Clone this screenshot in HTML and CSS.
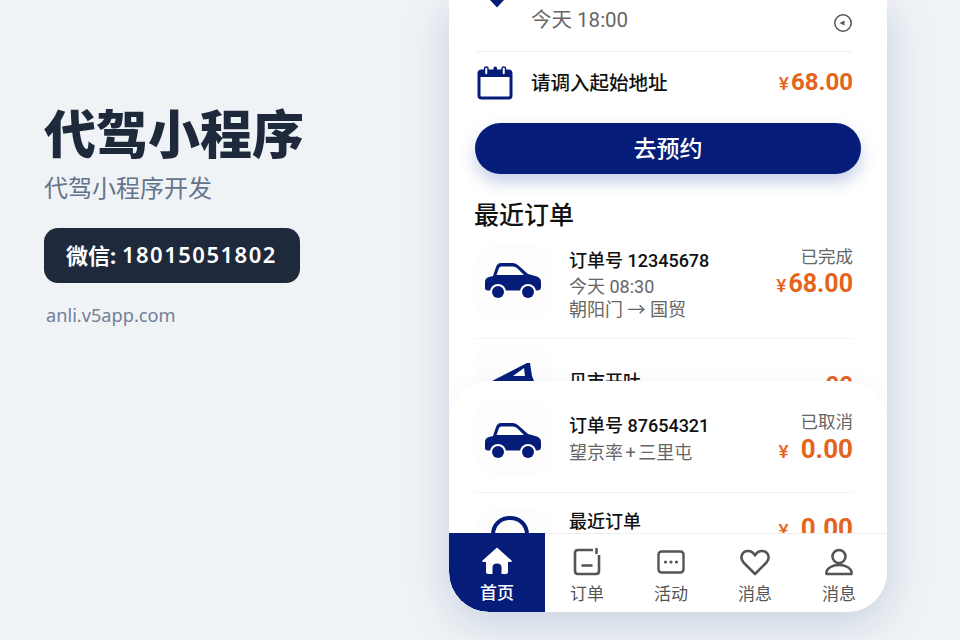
FILE: index.html
```html
<!DOCTYPE html>
<html lang="zh">
<head>
<meta charset="utf-8">
<title>代驾小程序</title>
<link rel="stylesheet" href="styles.css">
</head>
<body>
<svg class="defs" width="0" height="0" aria-hidden="true">
  <symbol id="car" viewBox="0 0 56 36">
    <path fill="#051d78" d="M0 19Q0 15 4 14L8 13L11 4Q12.500 0 16 0H28Q31 0 34 3L43 11L52 13.500Q56 15 56 19V24Q56 27.500 52 27.500H3Q0 27.500 0 25Z"/>
    <path fill="#fff" d="M11.500 12L14 5Q14.500 3.500 16.500 3.500H28Q30 3.500 32 5L39 12Z"/>
    <circle cx="13" cy="29" r="8" fill="#fff"/>
    <circle cx="13" cy="29" r="6" fill="#051d78"/>
    <circle cx="43" cy="29" r="8" fill="#fff"/>
    <circle cx="43" cy="29" r="6" fill="#051d78"/>
  </symbol>
</svg>
<main class="stage">
  <section class="intro">
    <h1 class="intro-title">代驾小程序</h1>
    <p class="intro-sub">代驾小程序开发</p>
    <div class="intro-badge">微信:&nbsp;<span class="intro-phone">18015051802</span></div>
    <p class="intro-link">anli.v5app.com</p>
  </section>

  <section class="phone">
    <div class="scroll">
      <div class="trip-row">
        <svg class="pin" width="20" height="8" viewBox="0 0 20 8"><path fill="#051d78" d="M3 0H17L10 7.500Z"/></svg>
        <span class="trip-time">今天 18:00</span>
        <svg class="clock" width="20" height="20" viewBox="0 0 20 20"><circle cx="10" cy="10" r="8.200" fill="none" stroke="#555" stroke-width="1.500"/><path fill="#555" d="M6.500 10L11.500 7.500V12.500Z"/></svg>
      </div>
      <div class="addr-row">
        <svg class="cal" width="36" height="34" viewBox="0 0 36 34"><rect x="2" y="5" width="32" height="27" rx="2.500" fill="#fff" stroke="#051d78" stroke-width="3"/><path fill="#051d78" d="M2 4H34V11H2Z"/><g fill="#fff" stroke="#051d78" stroke-width="1.500"><rect x="7.500" y="1" width="3.500" height="8" rx="1.700"/><rect x="25" y="1" width="3.500" height="8" rx="1.700"/></g><rect x="16.500" y="0.500" width="3.500" height="6" rx="1.700" fill="#051d78"/></svg>
        <span class="addr-text">请调入起始地址</span>
        <span class="price"><i class="yen">¥</i>68.00</span>
      </div>
      <button class="cta" type="button">去预约</button>
      <h2 class="section-title">最近订单</h2>

      <article class="order order-first">
        <div class="order-icon"><svg class="car" width="56" height="36"><use href="#car"/></svg></div>
        <div class="order-main">
          <div class="order-title">订单号 12345678</div>
          <div class="order-line">今天 08:30</div>
          <div class="order-line">朝阳门 → 国贸</div>
        </div>
        <div class="order-side">
          <div class="order-state">已完成</div>
          <div class="price price-large"><i class="yen">¥</i>68.00</div>
        </div>
      </article>

      <article class="order order-second">
        <div class="order-icon order-icon-top"><svg class="ramp" width="42" height="18" viewBox="0 0 42 18"><path fill="#051d78" fill-rule="evenodd" d="M0 18L35 0H38L40 13L42 18ZM21 13H33L32 5Z"/></svg></div>
        <div class="order-main">
          <div class="order-title">贝市开吐</div>
        </div>
        <div class="order-side">
          <div class="price">00</div>
        </div>
      </article>
    </div>

    <div class="sheet">
      <article class="order order-third">
        <div class="order-icon"><svg class="car" width="56" height="36"><use href="#car"/></svg></div>
        <div class="order-main">
          <div class="order-title">订单号 87654321</div>
          <div class="order-line">望京率 + 三里屯</div>
        </div>
        <div class="order-side">
          <div class="order-state">已取消</div>
          <div class="price price-wide"><i class="yen">¥</i>0.00</div>
        </div>
      </article>
      <article class="order order-fourth">
        <div class="order-icon order-icon-top"><svg class="bag" width="40" height="24" viewBox="0 0 40 24"><path fill="none" stroke="#051d78" stroke-width="4" d="M3 24V20C3 10 10 3 20 3S37 10 37 20V24"/></svg></div>
        <div class="order-main">
          <div class="order-title">最近订单</div>
        </div>
        <div class="order-side">
          <div class="price price-wide"><i class="yen">¥</i>0.00</div>
        </div>
      </article>
    </div>

    <nav class="tabbar">
      <a class="tab tab-active">
        <svg width="32" height="30" viewBox="0 0 32 30"><path fill="#fff" d="M16 1.500L30.500 14.500Q31.500 16 29.500 16H27V26Q27 28 25 28H20.500V21.500Q20.500 17.500 16 17.500T11.500 21.500V28H7Q5 28 5 26V16H2.500Q0.500 16 1.500 14.500Z"/></svg>
        <span>首页</span>
      </a>
      <a class="tab">
        <svg width="32" height="30" viewBox="0 0 32 30" fill="none" stroke="#555" stroke-width="2.600"><path d="M22 3H7Q4 3 4 6V24Q4 27 7 27H25Q28 27 28 24V8"/><path d="M10.500 18.500H21.500"/><path d="M25.500 2V6" stroke-linecap="round"/></svg>
        <span>订单</span>
      </a>
      <a class="tab">
        <svg width="32" height="30" viewBox="0 0 32 30" fill="none" stroke="#555" stroke-width="2.400"><rect x="3.500" y="4.500" width="25" height="21" rx="3"/><g fill="#555" stroke="none"><circle cx="10.500" cy="15" r="1.600"/><circle cx="16" cy="15" r="1.600"/><circle cx="21.500" cy="15" r="1.600"/></g></svg>
        <span>活动</span>
      </a>
      <a class="tab">
        <svg width="32" height="30" viewBox="0 0 32 30" fill="none" stroke="#555" stroke-width="2.600"><path d="M16 27L4.500 15.500C0 10 3.500 4 9 4C12 4 14.500 5.500 16 8.500C17.500 5.500 20 4 23 4C28.500 4 32 10 27.500 15.500Z" stroke-linejoin="round"/></svg>
        <span>消息</span>
      </a>
      <a class="tab">
        <svg width="32" height="30" viewBox="0 0 32 30" fill="none" stroke="#555" stroke-width="2.600"><circle cx="16" cy="9.500" r="6.500"/><path d="M3.500 27C2.500 21 10 18 16 18S29.500 21 28.500 27Z" stroke-linejoin="round"/></svg>
        <span>消息</span>
      </a>
    </nav>
  </section>
</main>
</body>
</html>
```
FILE: styles.css
```css
* { box-sizing: border-box; }

html, body {
  margin: 0;
  height: 100%;
  overflow: hidden;
}

body {
  background: #f0f3f6;
  font-family: "Roboto", "Noto Sans CJK SC", sans-serif;
}

.defs { display: block; height: 0; }

.stage {
  display: flex;
  width: 960px;
  height: 640px;
}

/* Left intro */
.intro {
  width: 449px;
  padding: 102px 0 0 44px;
  font-family: "Noto Sans", "Noto Sans CJK SC", sans-serif;
}

.intro-title {
  margin: 0;
  font-size: 52px;
  line-height: 64px;
  font-weight: 800;
  color: #1e293b;
}

.intro-sub {
  margin: 6px 0 0;
  font-size: 24px;
  line-height: 32px;
  color: #64748b;
}

.intro-badge {
  display: flex;
  align-items: center;
  width: 256px;
  height: 55px;
  margin-top: 24px;
  padding: 0 0 4px 22px;
  border-radius: 14px;
  background: #1e293b;
  color: #fff;
  font-size: 22px;
  font-weight: 700;
}

.intro-phone {
  font-weight: 600;
  letter-spacing: 1.500px;
}

.intro-link {
  margin: 18px 0 0 2px;
  font-size: 18.200px;
  line-height: 28px;
  color: #718096;
}

/* Phone */
.phone {
  position: relative;
  width: 438px;
  height: 612px;
  border-radius: 0 0 40px 40px;
  background: #fff;
  box-shadow: 0 10px 44px rgba(100, 125, 170, .3);
  overflow: hidden;
}

.scroll {
  height: 400px;
  padding: 0 34px 0 26px;
  overflow: hidden;
}

.trip-row {
  position: relative;
  height: 52px;
  padding-left: 56px;
  border-bottom: 1px solid #f0f0f2;
}

.pin {
  position: absolute;
  left: 12px;
  top: 0;
}

.trip-time {
  display: block;
  padding-top: 6px;
  font-size: 20.500px;
  line-height: 28px;
  color: #666;
}

.clock {
  position: absolute;
  right: 0;
  top: 13px;
}

.addr-row {
  display: flex;
  align-items: center;
  height: 62px;
}

.cal { margin: 0 18px 0 2px; flex: none; }

.addr-text {
  flex: 1;
  padding-bottom: 3px;
  font-size: 19.500px;
  font-weight: 500;
  color: #111;
}

.price {
  display: block;
  color: #e4641c;
  font-size: 24px;
  line-height: 30px;
  font-weight: 700;
  white-space: nowrap;
  text-align: right;
}

.price-large { font-size: 25px; }

.yen {
  margin-right: 2px;
  font-style: normal;
  font-size: 19px;
  font-weight: 500;
}

.cta {
  display: block;
  width: 386px;
  height: 51px;
  margin: 9px 0 0;
  padding: 0 0 2px;
  border: 0;
  border-radius: 26px;
  background: #051d78;
  box-shadow: 0 8px 16px rgba(40, 70, 170, .26);
  color: #fff;
  font: 500 23px/49px "Noto Sans CJK SC", sans-serif;
}

.section-title {
  margin: 26px 0 0 -1px;
  font-size: 25px;
  line-height: 32px;
  font-weight: 500;
  color: #111;
}

.order {
  display: flex;
  position: relative;
}

.order-icon {
  display: flex;
  align-items: center;
  justify-content: center;
  flex: none;
  width: 78px;
  height: 74px;
  margin: 0 17px 0 -1px;
  border-radius: 20px;
  background: #fdfdfd;
}

.order-icon-top { align-items: flex-start; }

.order-main { flex: 1; }

.order-title {
  font-size: 18px;
  line-height: 26px;
  font-weight: 500;
  color: #111;
}

.order-line {
  font-size: 18px;
  line-height: 23px;
  color: #666;
}

.order-title + .order-line { margin-top: 1px; }

.order-side { text-align: right; }

.order-state {
  font-size: 17.500px;
  line-height: 24px;
  color: #666;
}

.order-first {
  height: 94px;
  margin-top: 13px;
  border-bottom: 1px solid #f3f3f5;
}

.order-first .order-main { padding-top: 3px; }
.order-first .car { margin-top: -3px; }

.order-second { padding-top: 6px; }
.order-second .order-main { padding-top: 24px; }
.order-second .order-side { padding-top: 25px; }

.ramp { margin-top: 18px; }

/* Sheet over the list */
.sheet {
  position: absolute;
  left: 0;
  right: 0;
  top: 381px;
  height: 152px;
  padding: 0 34px 0 26px;
  border-radius: 40px 40px 0 0;
  background: #fff;
  box-shadow: 0 -4px 14px rgba(100, 125, 170, .05);
  overflow: hidden;
}

.price-wide { font-size: 26px; }
.price-wide .yen { margin-right: 12px; }

.order-third {
  height: 112px;
  padding-top: 20px;
  border-bottom: 1px solid #f3f3f5;
}

.order-third .order-main { padding-top: 12px; }
.order-third .order-side { padding-top: 9px; }
.order-third .car { margin-top: 6px; }
.order-third .order-line { margin-top: 2px; word-spacing: -2px; }

.order-fourth { padding-top: 16px; }
.order-fourth .order-side { padding-top: 4px; }

.bag { margin: 6px 6px 0 0; }

/* Tab bar */
.tabbar {
  position: absolute;
  left: 0;
  right: 0;
  bottom: 0;
  display: flex;
  height: 79px;
  border-top: 1px solid #efeff1;
  background: #fff;
}

.tab {
  display: flex;
  flex-direction: column;
  align-items: center;
  width: 84px;
  padding-top: 13px;
  color: #555;
  font-family: "Noto Sans CJK SC", sans-serif;
  font-size: 17px;
  line-height: 22px;
}

.tab span { margin-top: 5px; }

.tab-active {
  width: 96px;
  margin-top: -1px;
  border-bottom-left-radius: 40px;
  background: #051d78;
  color: #fff;
  font-weight: 500;
}
```
